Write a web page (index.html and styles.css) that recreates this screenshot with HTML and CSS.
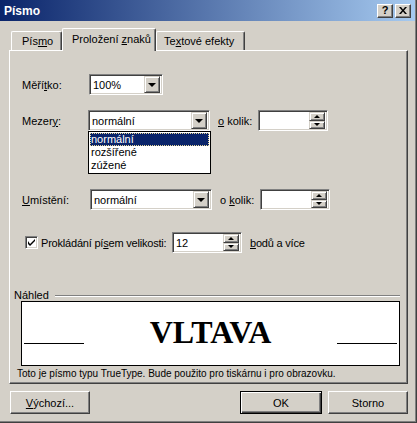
FILE: index.html
```html
<!DOCTYPE html>
<html lang="cs">
<head>
  <meta charset="UTF-8" />
  <title>Písmo</title>
  <link rel="stylesheet" href="styles.css">
</head>
<body>
  <div class="okno">
    <div class="titulek">
      <span class="titulek-text">Písmo</span>
      <div class="titulek-tlacitka">
        <span class="tl-male napoveda">?</span>
        <span class="tl-male">
          <svg width="8" height="7" viewBox="0 0 8 7"><path d="M0 0h2l2 2.5 2-2.5h2l-3 3.5 3 3.5h-2l-2-2.5-2 2.5h-2l3-3.5z" fill="#000"/></svg>
        </span>
      </div>
    </div>

    <div class="karty">
      <div class="karta prvni">Pís<u>m</u>o</div>
      <div class="karta vybrana">Proložení <u>z</u>naků</div>
      <div class="karta posledni">Te<u>x</u>tové efekty</div>
    </div>

    <div class="panel">
      <div class="radek r1">
        <span class="popis">Měří<u>t</u>ko:</span>
        <div class="pole combo uzke">
          <span class="hodnota">100%</span>
          <span class="sipka"><i class="dolu"></i></span>
        </div>
      </div>

      <div class="radek r2">
        <span class="popis">Mezer<u>y</u>:</span>
        <div class="pole combo otevrene">
          <span class="hodnota">normální</span>
          <span class="sipka"><i class="dolu"></i></span>
          <ul class="seznam">
            <li class="aktivni">normální</li>
            <li>rozšířené</li>
            <li>zúžené</li>
          </ul>
        </div>
        <span class="kolik"><u>o</u> kolik:</span>
        <div class="pole spin">
          <span class="hodnota"></span>
          <span class="spin-tl"><span class="sipka mala"><i class="nahoru"></i></span><span class="sipka mala"><i class="dolu"></i></span></span>
        </div>
      </div>

      <div class="radek r3">
        <span class="popis"><u>U</u>místění:</span>
        <div class="pole combo posun">
          <span class="hodnota">normální</span>
          <span class="sipka"><i class="dolu"></i></span>
        </div>
        <span class="kolik">o <u>k</u>olik:</span>
        <div class="pole spin">
          <span class="hodnota"></span>
          <span class="spin-tl"><span class="sipka mala"><i class="nahoru"></i></span><span class="sipka mala"><i class="dolu"></i></span></span>
        </div>
      </div>

      <div class="radek r4">
        <span class="zaskrt">
          <svg width="7" height="7" viewBox="0 0 7 7"><path d="M0 2v3l2 2 5-5v-2l-5 5z" fill="#000"/></svg>
        </span>
        <span class="popis-zaskrt">Prokládání pí<u>s</u>em velikosti:</span>
        <div class="pole spin">
          <span class="hodnota">12</span>
          <span class="spin-tl"><span class="sipka mala"><i class="nahoru"></i></span><span class="sipka mala"><i class="dolu"></i></span></span>
        </div>
        <span class="jednotka"><u>b</u>odů a více</span>
      </div>

      <div class="nahled-hlavicka">
        <span>Náhled</span>
        <span class="cara"></span>
      </div>
      <div class="nahled">
        <span class="podtrh"></span>
        <span class="vzor">VLTAVA</span>
        <span class="podtrh"></span>
      </div>
      <div class="info">Toto je písmo typu TrueType. Bude použito pro tiskárnu i pro obrazovku.</div>
    </div>

    <div class="tlacitka">
      <span class="tlacitko"><u>V</u>ýchozí...</span>
      <span class="mezera"></span>
      <span class="tlacitko vychozi">OK</span>
      <span class="tlacitko">Storno</span>
    </div>
  </div>
</body>
</html>
```

FILE: styles.css
```css
body {
  margin: 0;
  padding: 0;
  font-family: 'Liberation Sans', Tahoma, sans-serif;
  font-size: 11px;
  color: #000;
  background: #d4d0c8;
}

u {
  text-decoration: underline;
  text-underline-offset: 1px;
}

.okno {
  width: 417px;
  height: 423px;
  box-sizing: border-box;
  background: #d4d0c8;
  border-right: 1px solid #404040;
  border-bottom: 1px solid #404040;
  box-shadow: inset -1px -1px #808080;
  display: flex;
  flex-direction: column;
  white-space: nowrap;
}

.titulek {
  height: 21px;
  margin-right: 1px;
  background: linear-gradient(to right, #0a246a, #a6caf0);
  display: flex;
  align-items: center;
  justify-content: space-between;
  padding: 0 4px 0 4px;
}

.titulek-text {
  color: #fff;
  font-weight: bold;
  font-size: 12px;
}

.titulek-tlacitka {
  display: flex;
  gap: 2px;
}

.tl-male {
  width: 16px;
  height: 14px;
  box-sizing: border-box;
  background: #d4d0c8;
  border: 1px solid;
  border-color: #fff #404040 #404040 #fff;
  box-shadow: inset -1px -1px #808080;
  display: flex;
  align-items: center;
  justify-content: center;
}

.napoveda {
  font-weight: bold;
  font-size: 11px;
  line-height: 1;
}

.karty {
  display: flex;
  align-items: flex-end;
  margin: 7px 0 0 11px;
  height: 22px;
  position: relative;
  z-index: 1;
}

.karta {
  height: 19px;
  box-sizing: border-box;
  padding: 3px 10px 0;
  border-top: 1px solid #fff;
  border-left: 1px solid #fff;
  border-right: 1px solid #404040;
  box-shadow: inset -1px 0 #808080;
  border-radius: 2px 2px 0 0;
}

.karta.prvni {
  width: 51px;
  padding-left: 10px;
}

.karta.vybrana {
  height: 23px;
  margin-bottom: -1px;
  width: 94px;
  padding: 4px 0 0 9px;
  background: #d4d0c8;
}

.karta.posledni {
  width: 89px;
  padding-left: 7px;
  padding-right: 0;
}

.panel {
  margin: 0 8px 0 9px;
  height: 334px;
  box-sizing: border-box;
  border-top: 1px solid #fff;
  border-left: 1px solid #fff;
  border-right: 1px solid #404040;
  border-bottom: 1px solid #404040;
  box-shadow: inset -1px -1px #808080;
  display: flex;
  flex-direction: column;
}

.radek {
  display: flex;
  align-items: center;
  height: 21px;
  padding-left: 12px;
}

.r1 { margin-top: 23px; }
.r2 { margin-top: 15px; }
.r3 { margin-top: 58px; }
.r4 { margin-top: 22px; padding-left: 15px; }

.popis {
  width: 67px;
  flex: none;
}

.pole {
  height: 21px;
  flex: none;
  box-sizing: border-box;
  background: #fff;
  border: 1px solid;
  border-color: #808080 #fff #fff #808080;
  box-shadow: inset 1px 1px #404040, inset -1px -1px #d4d0c8;
  display: flex;
  align-items: center;
  padding: 2px;
  position: relative;
}

.hodnota {
  flex: 1;
  padding-left: 1px;
}

.combo { width: 122px; }
.combo.uzke { width: 74px; }
.combo.posun { margin-left: 1px; }
.combo.otevrene { margin-left: -1px; }

.sipka {
  width: 16px;
  height: 17px;
  box-sizing: border-box;
  background: #d4d0c8;
  border: 1px solid;
  border-color: #d4d0c8 #404040 #404040 #d4d0c8;
  box-shadow: inset 1px 1px #fff, inset -1px -1px #808080;
  display: flex;
  align-items: center;
  justify-content: center;
}

.dolu {
  width: 0;
  height: 0;
  border-left: 4px solid transparent;
  border-right: 4px solid transparent;
  border-top: 4px solid #000;
}

.nahoru {
  width: 0;
  height: 0;
  border-left: 4px solid transparent;
  border-right: 4px solid transparent;
  border-bottom: 4px solid #000;
}

.mala .dolu, .mala .nahoru {
  border-left-width: 3px;
  border-right-width: 3px;
  border-top-width: 3px;
  border-bottom-width: 3px;
}

.mala .dolu { border-bottom: 0; }
.mala .nahoru { border-top: 0; }

.spin {
  width: 70px;
}

.spin-tl {
  display: flex;
  flex-direction: column;
  height: 17px;
}

.sipka.mala {
  height: 8.5px;
}

.kolik {
  margin: 0 6px 0 8px;
}

.seznam {
  position: absolute;
  left: -1px;
  top: 20px;
  width: 123px;
  box-sizing: border-box;
  margin: 0;
  padding: 1px;
  list-style: none;
  background: #fff;
  border: 1px solid #000;
  z-index: 2;
}

.seznam li {
  height: 13px;
  line-height: 13px;
  padding-left: 1px;
}

.seznam li.aktivni {
  background: #0a246a;
  color: #fff;
  outline: 1px dotted #e8d898;
  outline-offset: -1px;
}

.zaskrt {
  width: 13px;
  height: 13px;
  flex: none;
  box-sizing: border-box;
  background: #fff;
  border: 1px solid;
  border-color: #808080 #fff #fff #808080;
  box-shadow: inset 1px 1px #404040, inset -1px -1px #d4d0c8;
  display: flex;
  align-items: center;
  justify-content: center;
  margin-right: 3px;
}

.popis-zaskrt {
  width: 131px;
  flex: none;
  letter-spacing: -0.2px;
}

.jednotka {
  margin-left: 8px;
  letter-spacing: -0.2px;
}

.nahled-hlavicka {
  margin: 37px 0 0 4px;
  height: 11px;
  display: flex;
  align-items: center;
  line-height: 11px;
}

.cara {
  flex: 1;
  height: 0;
  margin: 0 7px 0 6px;
  border-top: 1px solid #808080;
  border-bottom: 1px solid #fff;
}

.nahled {
  margin: 0 7px 0 11px;
  height: 65px;
  box-sizing: border-box;
  background: #fff;
  border: 1px solid #000;
  display: flex;
  align-items: flex-end;
  padding: 0 2px 20px;
}

.podtrh {
  width: 60px;
  border-bottom: 1px solid #000;
  margin-bottom: 1px;
}

.vzor {
  flex: 1;
  text-align: center;
  font-family: 'Liberation Serif', 'Times New Roman', serif;
  font-weight: bold;
  font-size: 32px;
  line-height: 1;
  margin-bottom: -3px;
}

.info {
  margin: 2px 0 0 7px;
  font-size: 10px;
  line-height: 12px;
}

.tlacitka {
  display: flex;
  margin: 7px 8px 0 10px;
  gap: 6px;
}

.mezera { flex: 1; }

.tlacitko {
  width: 80px;
  height: 23px;
  box-sizing: border-box;
  border: 1px solid;
  border-color: #fff #404040 #404040 #fff;
  box-shadow: inset -1px -1px #808080;
  display: flex;
  align-items: center;
  justify-content: center;
}

.tlacitko.vychozi {
  width: 82px;
  border-color: #000;
  box-shadow: inset 1px 1px #fff, inset -1px -1px #404040, inset -2px -2px #808080;
}
```
